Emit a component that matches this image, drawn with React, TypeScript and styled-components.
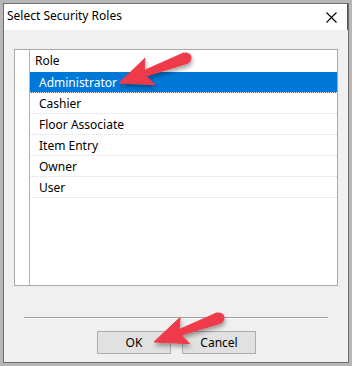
import React from 'react'
import styled, { createGlobalStyle } from 'styled-components'

const roles = ['Administrator', 'Cashier', 'Floor Associate', 'Item Entry', 'Owner', 'User']

const GlobalStyle = createGlobalStyle`
  html, body {
    margin: 0;
    padding: 0;
    background: #b7b7b7;
  }
  body {
    font-family: 'Noto Sans', 'Segoe UI', sans-serif;
    font-size: 12px;
    color: #000;
  }
`

const Screen = styled.div`
  position: relative;
  width: 352px;
  height: 366px;
  padding: 3px;
  box-sizing: border-box;
`

const Window = styled.div`
  width: 346px;
  height: 360px;
  box-sizing: border-box;
  border: 1px solid #6e6e6e;
  background: #f0f0f0;
  display: flex;
  flex-direction: column;
`

const TitleBar = styled.div`
  height: 26px;
  background: #fff;
  display: flex;
  align-items: center;
  justify-content: space-between;
  padding: 0 10px 0 3px;
  border-right: 1px solid #1a5fa8;
`

const Title = styled.span`
  font-size: 12px;
  line-height: 1;
  padding-bottom: 2px;
`

const Body = styled.div`
  flex: 1;
  display: flex;
  flex-direction: column;
  padding: 19px 0 0 10px;
`

const ListBox = styled.div`
  width: 324px;
  height: 237px;
  box-sizing: border-box;
  border: 1px solid #a8a8a8;
  background: #fff;
  display: flex;
`

const RowHeaders = styled.div`
  width: 14px;
  border-right: 1px solid #b4b4b4;
  background: #fff;
`

const Grid = styled.div`
  flex: 1;
  display: flex;
  flex-direction: column;
`

const HeaderCell = styled.div`
  height: 22px;
  line-height: 22px;
  padding-left: 5px;
`

const Row = styled.div<{ $selected?: boolean }>`
  height: 21px;
  line-height: 21px;
  padding-left: 9px;
  box-sizing: border-box;
  border-bottom: 1px dotted #dcdcdc;
  background: ${(p) => (p.$selected ? '#0078d7' : '#fff')};
  color: ${(p) => (p.$selected ? '#fff' : '#000')};
`

const Separator = styled.div`
  margin: 31px 0 0 10px;
  width: 304px;
  height: 1px;
  background: #a0a0a0;
  border-bottom: 1px solid #fff;
`

const Buttons = styled.div`
  display: flex;
  gap: 11px;
  margin: 12px 0 0 83px;
`

const Button = styled.div`
  width: 74px;
  height: 23px;
  box-sizing: border-box;
  border: 1px solid #adadad;
  background: #e1e1e1;
  display: flex;
  align-items: center;
  justify-content: center;
  padding-bottom: 1px;
`

const Overlay = styled.svg`
  position: absolute;
  left: 0;
  top: 0;
  pointer-events: none;
`

const CloseIcon = () => (
  <svg width="11" height="11" viewBox="0 0 11 11">
    <path d="M0.5 0.5 L10.5 10.5 M10.5 0.5 L0.5 10.5" stroke="#000" strokeWidth="1.1" />
  </svg>
)

type ArrowProps = { tip: [number, number]; tail: [number, number] }

const Arrow = ({ tip, tail }: ArrowProps) => {
  const dx = tail[0] - tip[0]
  const dy = tail[1] - tip[1]
  const len = Math.hypot(dx, dy)
  const ux = dx / len
  const uy = dy / len
  const nx = -uy
  const ny = ux
  const headLen = 30
  const headW = 14
  const bx = tip[0] + ux * headLen
  const by = tip[1] + uy * headLen
  const sw0 = 3
  const sw1 = 5.5
  const pts = [
    [tip[0], tip[1]],
    [bx + nx * headW + ux * 3, by + ny * headW + uy * 3],
    [bx + nx * sw0 - ux * 2, by + ny * sw0 - uy * 2],
    [tail[0] + nx * sw1, tail[1] + ny * sw1],
    [tail[0] - nx * sw1, tail[1] - ny * sw1],
    [bx - nx * sw0 - ux * 2, by - ny * sw0 - uy * 2],
    [bx - nx * headW + ux * 3, by - ny * headW + uy * 3],
  ]
  const d = pts.map((p, i) => `${i ? 'L' : 'M'}${p[0].toFixed(1)} ${p[1].toFixed(1)}`).join(' ') + ' Z'
  return (
    <g filter="url(#shadow)">
      <path d={d} fill="#ef3b48" strokeLinejoin="round" stroke="#ef3b48" strokeWidth="1" />
      <circle cx={tail[0]} cy={tail[1]} r={sw1} fill="#ef3b48" />
    </g>
  )
}

const App = () => {
  return (
    <Screen>
      <GlobalStyle />
      <Window>
        <TitleBar>
          <Title>Select Security Roles</Title>
          <CloseIcon />
        </TitleBar>
        <Body>
          <ListBox>
            <RowHeaders />
            <Grid>
              <HeaderCell>Role</HeaderCell>
              {roles.map((r, i) => (
                <Row key={r} $selected={i === 0}>
                  {r}
                </Row>
              ))}
            </Grid>
          </ListBox>
          <Separator />
          <Buttons>
            <Button>OK</Button>
            <Button>Cancel</Button>
          </Buttons>
        </Body>
      </Window>
      <Overlay width="352" height="366">
        <defs>
          <filter id="shadow" x="-20%" y="-20%" width="140%" height="160%">
            <feDropShadow dx="1" dy="3" stdDeviation="2" floodColor="#000" floodOpacity="0.35" />
          </filter>
        </defs>
        <Arrow tip={[119, 83]} tail={[186, 58]} />
        <Arrow tip={[154, 342]} tail={[219, 318]} />
      </Overlay>
    </Screen>
  )
}

export default App
